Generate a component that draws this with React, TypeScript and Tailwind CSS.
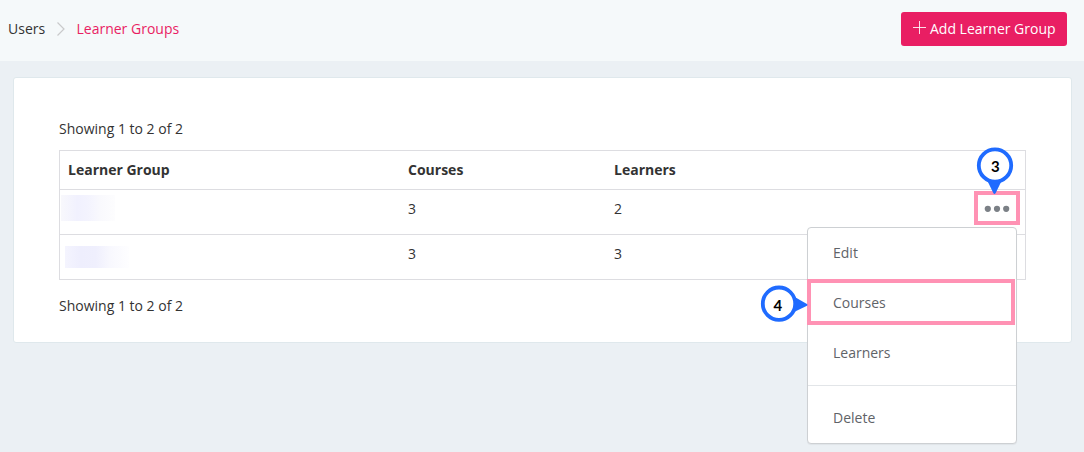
interface LearnerGroup {
  id: number
  courses: number
  learners: number
  nameClassName: string
}

const learnerGroups: LearnerGroup[] = [
  {
    id: 1,
    courses: 3,
    learners: 2,
    nameClassName: "mt-[5px] ml-px h-[26px] w-[54px] bg-[linear-gradient(90deg,#f8f8fc_0%,#f1f1fe_30%,#f3f3fe_48%,#f9f9fd_72%,#fdfdfe_100%)]",
  },
  {
    id: 2,
    courses: 3,
    learners: 3,
    nameClassName: "mt-[11px] ml-[5px] h-[22px] w-[64px] bg-[linear-gradient(90deg,#f4f4fe_0%,#eeeefd_25%,#efeffd_48%,#f8f8fe_70%,#fefeff_100%)]",
  },
]

const menuItems = ["Edit", "Courses", "Learners"]

function Breadcrumb() {
  return (
    <nav className="flex items-center">
      <span className="w-[37px] whitespace-nowrap text-[#333333]">Users</span>
      <svg className="mr-[11.5px] ml-3 h-[14px] w-2" viewBox="0 0 8 14" fill="none" stroke="#c9cacb" strokeWidth="1.2">
        <path d="M0.5 0.5L7 7L0.5 13.5" />
      </svg>
      <span className="text-[#e91e63]">Learner Groups</span>
    </nav>
  )
}

function GroupsTable() {
  return (
    <table className="w-[967px] table-fixed border-separate border-spacing-0 border border-[#dddde1]">
      <colgroup>
        <col className="w-[340px]" />
        <col className="w-[206px]" />
        <col className="w-[206px]" />
        <col />
      </colgroup>
      <thead>
        <tr className="h-[39px] text-left">
          <th className="border-b border-[#dddde1] p-0 pl-2 font-bold">Learner Group</th>
          <th className="border-b border-[#dddde1] p-0 pl-2 font-bold">Courses</th>
          <th className="border-b border-[#dddde1] p-0 pl-2 font-bold">Learners</th>
          <th className="border-b border-[#dddde1] p-0" />
        </tr>
      </thead>
      <tbody className="[&>tr:first-child>td]:border-b">
        {learnerGroups.map((group) => (
          <tr key={group.id} className="h-[45px] align-top last:h-[44px]">
            <td className="border-[#dddde1] p-0">
              <div className={group.nameClassName} />
            </td>
            <td className="border-[#dddde1] p-0 pt-[9px] pl-2">{group.courses}</td>
            <td className="border-[#dddde1] p-0 pt-[9px] pl-2">{group.learners}</td>
            <td className="border-[#dddde1] p-0" />
          </tr>
        ))}
      </tbody>
    </table>
  )
}

function ActionsMenu() {
  return (
    <div className="absolute top-[227px] left-[807px] h-[217px] w-[210px] rounded-[4px] border border-[#cdd0d3] bg-white text-[#5f6368] shadow-[0_1px_1px_rgba(0,0,0,0.05)]">
      {menuItems.map((item) => (
        <div key={item} className="flex h-[50px] items-center pl-[25px]">{item}</div>
      ))}
      <div className="mt-[7px] border-t border-[#e2e5e8] pt-[7px]">
        <div className="flex h-[50px] items-center pl-[25px]">Delete</div>
      </div>
    </div>
  )
}

function StepThree() {
  return (
    <>
      <div className="absolute top-[191px] left-[974px] h-[34px] w-[46px] border-4 border-[#ff92b4] bg-white">
        <svg className="h-[26px] w-[38px]" viewBox="0 0 38 26" fill="#7b8086">
          <circle cx="9.8" cy="13.8" r="3.1" />
          <circle cx="19" cy="13.8" r="3.1" />
          <circle cx="28.2" cy="13.8" r="3.1" />
        </svg>
      </div>
      <svg className="absolute top-[147px] left-[976px] h-12 w-[38px]" viewBox="0 0 38 48">
        <path d="M10.5 32L17.3 46Q18.5 48 19.7 46L26.5 32Z" fill="#1f6bff" />
        <circle cx="19" cy="18.5" r="16.2" fill="white" stroke="#1f6bff" strokeWidth="3.8" />
        <text x="19.4" y="25.2" textAnchor="middle" className="fill-black font-['Lato',sans-serif] text-[15px] font-bold">3</text>
      </svg>
    </>
  )
}

function StepFour() {
  return (
    <>
      <div className="absolute top-[279px] left-[807px] h-[46px] w-[208px] border-4 border-[#ff92b4]" />
      <svg className="absolute top-[285px] left-[760px] h-[38px] w-12" viewBox="0 0 48 38">
        <path d="M33 11L46.5 18.8Q48.5 20 46.5 21L33 27.5Z" fill="#1f6bff" />
        <circle cx="19" cy="18.7" r="16.2" fill="white" stroke="#1f6bff" strokeWidth="3.8" />
        <text x="17.8" y="25.9" textAnchor="middle" className="fill-black font-['Lato',sans-serif] text-[15px] font-bold">4</text>
      </svg>
    </>
  )
}

export default function App() {
  return (
    <div className="relative h-[452px] w-[1084px] overflow-hidden bg-[#ebf0f4] font-['Open_Sans',sans-serif] text-[14px] leading-5 text-[#333333]">
      <header className="flex h-[61px] items-start justify-between bg-[#f5f9fa] pr-[17px] pl-2">
        <div className="pt-[19px]">
          <Breadcrumb />
        </div>
        <button className="mt-3 flex h-[34px] w-[166px] items-center rounded-[3px] bg-[#e91e63] pl-3 whitespace-nowrap text-white">
          <svg className="mr-1 mb-[3px] size-[13px] shrink-0" viewBox="0 0 13 13" stroke="white" strokeOpacity="0.85">
            <path d="M6.5 0V13M0 6.5H13" />
          </svg>
          Add Learner Group
        </button>
      </header>

      <main className="mt-4 ml-[13px] h-[266px] w-[1059px] rounded-[3px] border border-[#dfe8ec] bg-white pt-[41px] pl-[45px]">
        <p className="mb-[11px]">Showing 1 to 2 of 2</p>
        <GroupsTable />
        <p className="mt-4">Showing 1 to 2 of 2</p>
      </main>

      <ActionsMenu />
      <StepThree />
      <StepFour />
    </div>
  )
}
